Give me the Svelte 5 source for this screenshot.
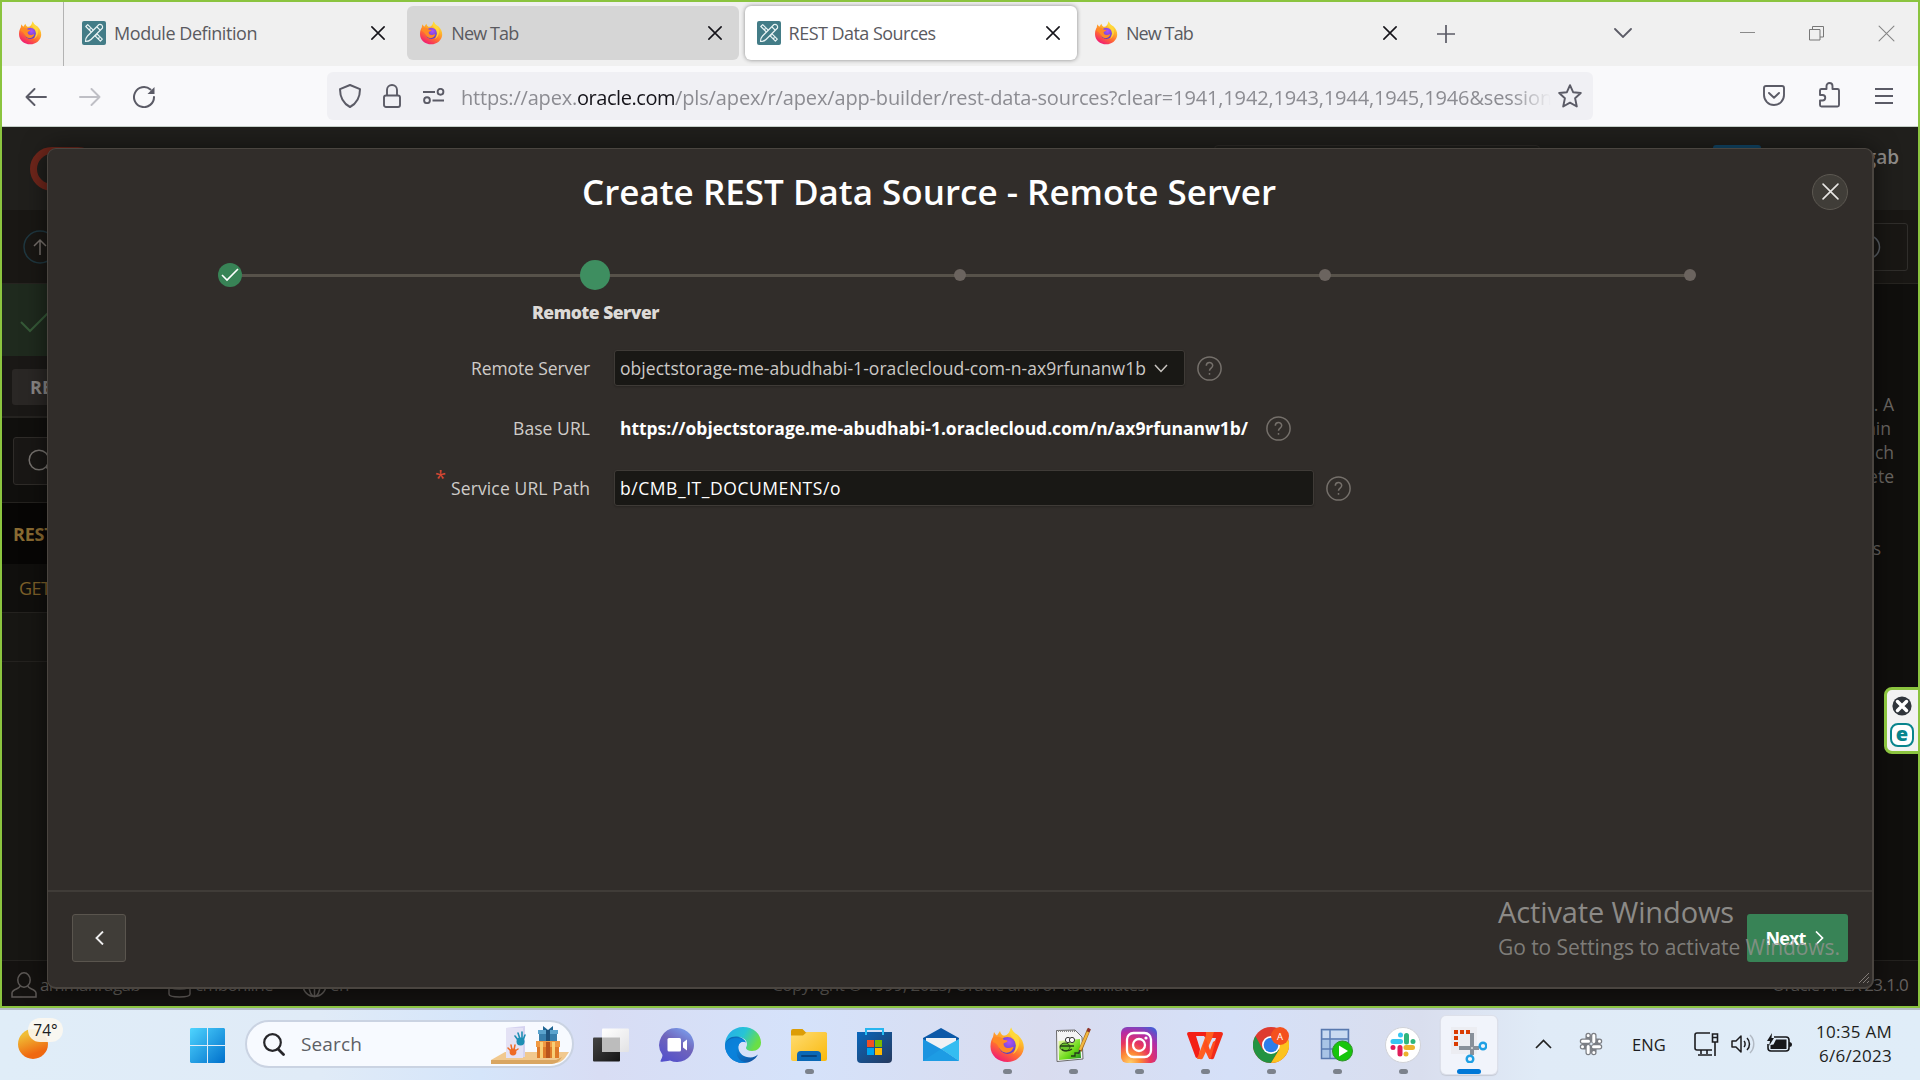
<script>
  // Spreads letter spacing so a label fills the width given in pixels.
  function fit(node, width) {
    const range = document.createRange();
    range.selectNodeContents(node);
    const natural = range.getBoundingClientRect().width;
    node.style.letterSpacing = `${(width - natural) / node.textContent.length}px`;
  }

  const tabs = [
    { title: 'Module Definition', icon: 'apex', width: 143, state: '' },
    { title: 'New Tab', icon: 'firefox', width: 67, state: 'hover' },
    { title: 'REST Data Sources', icon: 'apex', width: 147, state: 'active' },
    { title: 'New Tab', icon: 'firefox', width: 67, state: '' }
  ];

  const steps = ['done', 'current', 'todo', 'todo', 'todo'];

  const apps = [
    { id: 'taskview' }, { id: 'chat' }, { id: 'edge' }, { id: 'explorer', open: true },
    { id: 'store' }, { id: 'mail' }, { id: 'firefox', open: true }, { id: 'notepad', open: true },
    { id: 'instagram', open: true }, { id: 'wps', open: true }, { id: 'chrome', open: true },
    { id: 'server', open: true }, { id: 'slack', open: true }, { id: 'snip', active: true }
  ];
</script>

{#snippet firefox(size)}
  <svg width={size} height={size} viewBox="0 0 36 36">
    <defs>
      <linearGradient id="ffBody" x1=".8" y1="0" x2=".25" y2="1">
        <stop offset="0" stop-color="#fff44f" /><stop offset=".35" stop-color="#ffb42a" />
        <stop offset=".65" stop-color="#ff6a33" /><stop offset="1" stop-color="#f0127a" />
      </linearGradient>
      <radialGradient id="ffCore" cx=".6" cy=".3" r=".7">
        <stop offset="0" stop-color="#b052f5" /><stop offset="1" stop-color="#4f3fc8" />
      </radialGradient>
    </defs>
    <path d="M22 0c1 4 3 6 7 8 4 4 6 8 5.800 13C34 29 27 35 18.500 35 9 35 1.500 28.500 1.500 19.500c0-5 1.500-8 2.500-9.500l1-5c1 1.500 1.500 2.500 3 3.500L11 4c.5 2 1.500 3.500 3 4.500 3 0 4-.5 6-3C21 4 22 2 22 0z" fill="url(#ffBody)" />
    <circle cx="18.500" cy="18.500" r="8.500" fill="url(#ffCore)" />
    <path d="M4 11c4-2 9-1 11 2 1 0 3.500 0 3.500 1s-2 1.500-4 2.500c0 3 2 5 5.500 4.500 2-.3 3-1 4.500-1-1 4-4.500 6.500-8.500 5.500C9 24 10 16 4 15z" fill="#ff8a25" />
    <path d="M22 1c1.500 4 5 5.500 7 9 3 6 0 14-5 17 4-6 4-12-1-17-3-3-3-6-1-9z" fill="#ffd93b" opacity=".85" />
  </svg>
{/snippet}

{#snippet apex()}
  <svg width="24" height="24" viewBox="0 0 24 24">
    <rect width="24" height="24" rx="2" fill="#437c87" />
    <g fill="none" stroke="#e9f3f4" stroke-width="1.200" stroke-linejoin="round">
      <path d="M3.800 5.500 5.700 3.600 20.300 18.200 18.400 20.100zM7 9l1.500-1.500M10 12l1.500-1.500M13 15l1.500-1.500M16 18l1.500-1.500" />
      <path d="M17 3.500c2.500-.5 4 1 3.500 3.500L9 18.500C7.500 20 5 20.500 3.500 20.500c0-1.500.5-4 2-5.500z" fill="#437c87" />
      <path d="M15 6l3.200 3.200" />
    </g>
  </svg>
{/snippet}

{#snippet cross(size, color, w)}
  <svg width={size} height={size} viewBox="0 0 16 16"><path d="M1 1l14 14M15 1 1 15" fill="none" stroke={color} stroke-width={w} stroke-linecap="round" /></svg>
{/snippet}

{#snippet help()}
  <svg class="help" width="25" height="25" viewBox="0 0 25 25" fill="none" stroke="#75706b" stroke-width="1.500">
    <circle cx="12.500" cy="12.500" r="11.600" /><path d="M9.300 9.800c0-4.300 6.400-4.200 6.400-.2 0 2.600-3.200 2.500-3.200 5.200M12.500 17v1.800" />
  </svg>
{/snippet}

{#snippet appIcon(id)}
  {#if id === 'firefox'}
    {@render firefox(36)}
  {:else}
    <svg width="36" height="36" viewBox="0 0 36 36">
      {#if id === 'taskview'}
        <defs><linearGradient id="tv" y2="1"><stop stop-color="#444" /><stop offset="1" stop-color="#151515" /></linearGradient>
          <linearGradient id="tvl" x2="1" y2="1"><stop stop-color="#fff" /><stop offset="1" stop-color="#e2e2e4" /></linearGradient></defs>
        <rect y="10.500" width="27" height="24" rx="1" fill="url(#tv)" />
        <rect x="9" y="1.500" width="27" height="23.500" rx="1" fill="url(#tvl)" />
        <path d="M9 10.500h18V25H9z" fill="#bcbcbc" />
      {:else if id === 'chat'}
        <defs><linearGradient id="ch" x1=".8" x2=".2" y2="1"><stop stop-color="#7aa0ee" /><stop offset=".45" stop-color="#7065bb" /><stop offset="1" stop-color="#5350cc" /></linearGradient></defs>
        <path d="M18 1a17 17 0 1 1-7 32.500C7 34.500 3 35 1.500 34.500 1 34 3.500 31 3.500 28A17 17 0 0 1 18 1z" fill="url(#ch)" />
        <rect x="8.500" y="11" width="13.500" height="13.500" rx="1.500" fill="#fff" /><path d="M24 15.500l4-3v11l-4-3z" fill="#fff" />
      {:else if id === 'edge'}
        <defs><linearGradient id="eg" x2="1" y2=".4"><stop stop-color="#27a9ee" /><stop offset=".55" stop-color="#27c4d5" /><stop offset="1" stop-color="#6adf45" /></linearGradient>
          <linearGradient id="eb" x2="1" y2="1"><stop stop-color="#0c5ba3" /><stop offset=".4" stop-color="#0a84da" /><stop offset="1" stop-color="#134a96" /></linearGradient></defs>
        <path d="M0 18C0 8 8 0 18 0c11 0 18 7.500 18 15.500 0 5.500-4 8.500-9 8.500-4 0-6-1.500-6-3 0-1 1-1.500 1-4 0-4-4-7-9.500-7C6 10 1 14 0 18z" fill="url(#eg)" />
        <path d="M0 18C1 12 6 9 12 9.500c4 .5 8 3 9 6-5-2-8 1-7.500 6 .5 5 5.500 9 12 9 3 0 6-1.500 7.500-3C30 33 25 36 18 36 8 36 0 28 0 18z" fill="url(#eb)" />
        <path d="M13.500 18.500C9 24 12 35 22 35.500c-1 .5-2.500.5-4 .5C8 36 0 28 0 18c1-4 5-7 10-7 5 0 8 1.500 10 4-3-1-5.500.5-6.500 3.500z" fill="#0b83dc" opacity=".85" />
      {:else if id === 'explorer'}
        <defs><linearGradient id="ex" x2="1" y2="1"><stop stop-color="#ffdc72" /><stop offset="1" stop-color="#f9b90d" /></linearGradient></defs>
        <path d="M0 4q0-2 2-2h9.500L15 5.500h19q2 0 2 2V14H0z" fill="#dc9d06" />
        <path d="M0 8.500h12L16 5h18q2 0 2 2v25q0 2-2 2H2q-2 0-2-2z" fill="url(#ex)" />
        <path d="M6 34V28q0-4 4-4h16q4 0 4 4v6z" fill="#0a68b6" /><path d="M11 29h14" stroke="#06437e" stroke-width="2" stroke-linecap="round" />
      {:else if id === 'store'}
        <defs><linearGradient id="st" x2="1" y2="1"><stop stop-color="#0967bd" /><stop offset="1" stop-color="#26395d" /></linearGradient></defs>
        <path d="M9 8V2h17v6" fill="none" stroke="#27b5ef" stroke-width="2" />
        <path d="M0 5h35v27q0 4-4 4H4q-4 0-4-4z" fill="url(#st)" /><path d="M9 5v3M26 5v3" stroke="#27c0f5" stroke-width="2" />
        <path d="M10 13h7v7h-7z" fill="#f25022" /><path d="M18 13h7v7h-7z" fill="#7fba00" /><path d="M10 21h7v7h-7z" fill="#00a4ef" /><path d="M18 21h7v7h-7z" fill="#ffb900" />
      {:else if id === 'mail'}
        <path d="M0 11 18 1l18 10v6H0z" fill="#0c59a8" /><path d="M3 11h30v8L18 26 3 19z" fill="#f0f1f4" />
        <path d="M0 12 18 22 36 34H0z" fill="#1b94e0" /><path d="M36 12 18 22 36 34z" fill="#35bdf1" /><path d="M0 34h36L18 22z" fill="#1d9ce4" />
      {:else if id === 'notepad'}
        <defs><linearGradient id="np" y2="1"><stop stop-color="#eff9a8" /><stop offset=".6" stop-color="#6ddb1a" /><stop offset="1" stop-color="#1a8b22" /></linearGradient></defs>
        <path d="M1.500 3.500 20 3l7 7 1 22-26 2.500z" fill="#f5f5f5" stroke="#6b6b6b" />
        <path d="M3.500 14 25 12l1 19-22 2z" fill="url(#np)" />
        <path d="M3 4h18" stroke="#888" stroke-width="2" stroke-dasharray="1 1" />
        <ellipse cx="10" cy="20" rx="5" ry="4" fill="#6ac62c" stroke="#2d4c1b" /><path d="M5 19h14M7 22c2 3 7 2 10 0M16 29h4v-3h4" fill="none" stroke="#243d18" stroke-width="1.300" />
        <circle cx="13" cy="13" r="2.600" fill="#fff" stroke="#333" /><circle cx="17" cy="13" r="2.600" fill="#fff" stroke="#333" />
        <path d="M34 2 25 24" stroke="#a3691b" stroke-width="3.500" /><path d="M33 5 25 23" stroke="#f2b740" stroke-width="2.300" /><path d="M34.500 1.500 33 4.500" stroke="#8e3131" stroke-width="3" /><path d="M25 23l-1.500 4" stroke="#333" stroke-width="1.500" />
      {:else if id === 'instagram'}
        <defs><radialGradient id="ig" cx=".25" cy="1" r="1.150"><stop stop-color="#ffd06a" /><stop offset=".25" stop-color="#fd8a35" /><stop offset=".5" stop-color="#e8345f" /><stop offset=".75" stop-color="#b52ca5" /><stop offset="1" stop-color="#4a5bd3" /></radialGradient></defs>
        <rect width="36" height="36" rx="6" fill="url(#ig)" />
        <g fill="none" stroke="#fff" stroke-width="2.300"><rect x="6" y="6" width="24" height="24" rx="6.500" /><circle cx="18" cy="18" r="6" /></g><circle cx="25" cy="11" r="1.600" fill="#fff" />
      {:else if id === 'wps'}
        <path d="M0 7q0-2 2-2h20l-3 7-2-3H9l4 13-1 8-2 1q-1 0-1.500-1z" fill="#f31f16" /><path d="M19 5h9L16 31q-1 2-3 1h-3l9-24z" fill="#ff5f1f" /><path d="M27 5h7q2 0 2 2L27 31q-1 2-3 1h-2l7-21h-4z" fill="#f12b18" /><path d="M19 12l4 11 3-8 3-2-5 18q-1 2-2.500 0L16 19z" fill="#ff4e1e" />
      {:else if id === 'chrome'}
        <circle cx="18" cy="18" r="18" fill="#de3b30" />
        <path d="M2.400 9A18 18 0 0 0 18 36l8-13H10z" fill="#229342" /><path d="M18 36A18 18 0 0 0 33.600 9H18l8 14z" fill="#fcc31e" />
        <circle cx="18" cy="18" r="9" fill="#fff" /><circle cx="18" cy="18" r="7.300" fill="#2b7de9" />
        <circle cx="27" cy="9" r="9" fill="#f4511e" /><text x="27" y="12.500" text-anchor="middle" font-size="9.500" fill="#fff">A</text>
      {:else if id === 'server'}
        <rect x="2.500" y="2.500" width="27" height="29" fill="#a9c4e6" stroke="#5878ae" stroke-width="1.500" />
        <path d="M3 12h26M3 22h26M11 3v28" stroke="#5b7cb4" stroke-width="1.300" /><path d="M12 4h16v7H12zM4 4h6v7H4z" fill="#c9daf1" />
        <circle cx="23.500" cy="24" r="10" fill="#17c50c" stroke="#2e9326" /><path d="M20 18.500v11l9-5.500z" fill="#fff" />
      {:else if id === 'slack'}
        <circle cx="18" cy="18" r="17.500" fill="#fff" stroke="#d0d2d8" />
        <g stroke-width="5" stroke-linecap="round"><path d="M15.500 8v0M8 14.500h7.500" stroke="#36c5f0" /><path d="M21.500 8.500v6.500M28 14.500v0" stroke="#2eb67d" /><path d="M8 20.500v0M15 20.500v6.500" stroke="#e01e5a" /><path d="M21 20.500h6.500M21 27v0" stroke="#ecb22e" /></g>
      {:else if id === 'snip'}
        <rect y="0" width="26" height="27" fill="#eae7ec" opacity=".6" />
        <path d="M3 3h4v4H3zM9 3h4v4H9zM15 3h4v4h-4zM3 9h4v4H3zM3 15h4v4H3z" fill="#da3b01" />
        <path d="M21 6v22M8 21h20" stroke="#88909a" stroke-width="4" /><circle cx="21" cy="21" r="1" fill="#ddd" />
        <g fill="none" stroke="#1fa0e4" stroke-width="2.400"><circle cx="32" cy="19" r="3.300" /><circle cx="19" cy="32" r="3.300" /></g>
      {/if}
    </svg>
  {/if}
{/snippet}

<div class="screen">
  <div class="window">
    <div class="tabbar">
      <div class="pinned">{@render firefox(24)}</div>
      {#each tabs as tab}
        <div class="tab {tab.state}">
          {#if tab.icon === 'apex'}{@render apex()}{:else}{@render firefox(24)}{/if}
          <span class="tab-title"><span use:fit={tab.width}>{tab.title}</span></span>
          {@render cross(14, '#15141a', 1.8)}
        </div>
      {/each}
      <svg class="plus" width="18" height="18" viewBox="0 0 18 18"><path d="M9 0v18M0 9h18" stroke="#5b5b66" stroke-width="1.700" /></svg>
      <div class="controls">
        <svg width="18" height="10" viewBox="0 0 18 10"><path d="M1 1l8 8 8-8" fill="none" stroke="#5b5b66" stroke-width="1.800" stroke-linecap="round" /></svg>
        <svg width="15" height="16" viewBox="0 0 15 16"><path d="M0 7.500h15" stroke="#8a8a8a" /></svg>
        <svg width="15" height="15" viewBox="0 0 15 15" fill="none" stroke="#777"><path d="M.5 3.500h10.500V14H.5zM3.500 3.500v-3h11v10.500H11" /></svg>
        {@render cross(17, '#858585', 1)}
      </div>
    </div>

    <div class="toolbar">
      <div class="nav">
        <svg width="22" height="18" viewBox="0 0 22 18" fill="none" stroke="#5b5b66" stroke-width="1.900" stroke-linecap="round" stroke-linejoin="round"><path d="M21 9H1.500M9.500 1l-8 8 8 8" /></svg>
        <svg width="22" height="18" viewBox="0 0 22 18" fill="none" stroke="#bfbfc5" stroke-width="1.900" stroke-linecap="round" stroke-linejoin="round"><path d="M1 9h19.500M12.500 1l8 8-8 8" /></svg>
        <svg width="22" height="22" viewBox="0 0 22 22"><path d="M21 11a10 10 0 1 1-3.500-7.500" fill="none" stroke="#5b5b66" stroke-width="2" stroke-linecap="round" /><path d="M21.500 1v7h-7z" fill="#5b5b66" /></svg>
      </div>
      <div class="urlbox">
        <svg width="22" height="24" viewBox="0 0 22 24" fill="none" stroke="#5b5b66" stroke-width="2" stroke-linejoin="round"><path d="M11 1l10 4.200c0 8-3 14-10 17.800C4 19.200 1 13.200 1 5.200z" /></svg>
        <svg width="18" height="24" viewBox="0 0 18 24" fill="none" stroke="#5b5b66" stroke-width="1.900"><rect x="1" y="11.500" width="16" height="11.500" rx="2" /><path d="M4 11.500V6a5 5 0 0 1 10 0v5.500" /></svg>
        <svg width="22" height="16" viewBox="0 0 22 16" fill="none" stroke="#5b5b66" stroke-width="1.900"><path d="M0 4h12M9.500 12.500H21" /><circle cx="17.500" cy="3.800" r="2.900" /><circle cx="4" cy="12.200" r="2.900" /></svg>
        <div class="url"><span use:fit={116}>https://apex.</span><span class="host" use:fit={98}>oracle.com</span><span use:fit={877}>/pls/apex/r/apex/app-builder/rest-data-sources?clear=1941,1942,1943,1944,1945,1946&amp;session</span></div>
        <svg width="24" height="24" viewBox="0 0 24 24" fill="none" stroke="#5b5b66" stroke-width="1.900" stroke-linejoin="round"><path d="M12 1.200l3.100 7 7.700.8-5.700 5.200 1.700 8.300L12 18.600 5.200 22.500l1.700-8.300L1.200 9l7.700-.8z" /></svg>
      </div>
      <div class="extras">
        <svg width="22" height="22" viewBox="0 0 22 22" fill="none" stroke="#5b5b66" stroke-width="1.900" stroke-linecap="round" stroke-linejoin="round"><path d="M3 1h16q2 0 2 2v7a10 10 0 0 1-20 0V3q0-2 2-2zM6 8l5 4.800L16 8" /></svg>
        <svg width="22" height="26" viewBox="0 0 22 26" fill="none" stroke="#5b5b66" stroke-width="1.900" stroke-linejoin="round"><path d="M2 13V8.500q0-1.500 1.500-1.500h5V4a3 3 0 0 1 6 0v3h5q1.500 0 1.500 1.500V23q0 1.500-1.500 1.500h-16Q2 24.500 2 23v-4.500h2.500a2.700 2.700 0 0 0 0-5.500z" /></svg>
        <svg width="18" height="16" viewBox="0 0 18 16"><path d="M0 1h18M0 8h18M0 15h18" stroke="#5b5b66" stroke-width="1.900" /></svg>
      </div>
    </div>

    <div class="page">
      <header class="app-header">
        <svg class="oracle" width="70" height="44" viewBox="0 0 70 44"><rect x="3.500" y="3.500" width="63" height="37" rx="18.500" fill="none" stroke="#6f261b" stroke-width="7" /></svg>
        <span class="ghost-search"></span><span class="badge"></span>
        <b class="account">ammar.ragab</b>
      </header>
      <div class="crumbs">
        <svg width="34" height="34" viewBox="0 0 34 34" fill="none"><circle cx="17" cy="17" r="16" stroke="#1f3740" stroke-width="1.500" /><path d="M17 25V10M11 16l6-6 6 6" stroke="#77716c" stroke-width="1.500" /></svg>
        <span class="crumb-button"><svg width="26" height="26" viewBox="0 0 26 26"><circle cx="13" cy="13" r="11.500" fill="none" stroke="#5b6066" stroke-width="1.500" /></svg></span>
      </div>
      <div class="columns">
        <div class="main">
          <div class="alert"><svg width="30" height="22" viewBox="0 0 30 22"><path d="M1 11l9 9L29 1" fill="none" stroke="#365a38" stroke-width="2" /></svg></div>
          <div class="pills"><b>REST Data Sources</b></div>
          <div class="search"><div><svg width="26" height="26" viewBox="0 0 26 26" fill="none" stroke="#77736f" stroke-width="1.500"><circle cx="11" cy="11" r="9.800" /><path d="M18 18l7 7" /></svg></div></div>
          <div class="heading"><b>REST Source</b></div>
          <div class="row">GET</div>
          <div class="blank"></div>
        </div>
        <aside><p>. A</p><p>ain</p><p>ch</p><p>ete</p><p class="later">s</p></aside>
      </div>
      <footer>
        <span class="foot-item"><svg width="26" height="26" viewBox="0 0 26 26" fill="none" stroke="#5c5855" stroke-width="1.500"><ellipse cx="13" cy="8" rx="6.200" ry="7.200" /><path d="M9 14c0 3-8 3-8 7v4h24v-4c0-4-8-4-8-7" /></svg><span use:fit={100}>ammar.ragab</span></span>
        <span class="foot-item second"><svg width="23" height="26" viewBox="0 0 23 26" fill="none" stroke="#5c5855" stroke-width="1.500"><ellipse cx="11.500" cy="5" rx="10.500" ry="4" /><path d="M1 5v17c0 4 21 4 21 0V5M1 14c0 4 21 4 21 0" /></svg><span use:fit={78}>cmbonline</span></span>
        <span class="foot-item third"><svg width="25" height="26" viewBox="0 0 25 26" fill="none" stroke="#5c5855" stroke-width="1.500"><circle cx="12.500" cy="13" r="11.500" /><ellipse cx="12.500" cy="13" rx="5.500" ry="11.500" /><path d="M1 13h23M12.500 1v24" /></svg><span use:fit={19}>en</span></span>
        <span class="copyright"><span use:fit={377}>Copyright © 1999, 2023, Oracle and/or its affiliates.</span></span>
        <span class="version" use:fit={136}>Oracle APEX 23.1.0</span>
      </footer>

      <section class="dialog">
        <div class="title-row">
          <h1><span use:fit={694}>Create REST Data Source - Remote Server</span></h1>
          <button class="close" aria-label="Close">{@render cross(17, '#e8e6e4', 1.5)}</button>
        </div>
        <div class="steps">
          {#each steps as step}
            <div class="step"><i class={step}>{#if step === 'done'}<svg width="18" height="14" viewBox="0 0 18 14"><path d="M1 7l5 5L17 1" fill="none" stroke="#fff" stroke-width="1.600" /></svg>{/if}</i></div>
          {/each}
        </div>
        <div class="step-label"><b use:fit={127}>Remote Server</b></div>
        <div class="form">
          <label for="server"><span use:fit={119}>Remote Server</span></label>
          <div class="field">
            <div class="control select" id="server"><span use:fit={526}>objectstorage-me-abudhabi-1-oraclecloud-com-n-ax9rfunanw1b</span><svg width="14" height="9" viewBox="0 0 14 9"><path d="M1 1l6 6.500L13 1" fill="none" stroke="#c9c5c1" stroke-width="1.500" /></svg></div>
            {@render help()}
          </div>
          <label for="base"><span use:fit={77}>Base URL</span></label>
          <div class="field base" id="base"><b><span use:fit={628}>https://objectstorage.me-abudhabi-1.oraclecloud.com/n/ax9rfunanw1b/</span></b>{@render help()}</div>
          <label for="path"><em>*</em><span use:fit={139}>Service URL Path</span></label>
          <div class="field">
            <div class="control input" id="path"><span use:fit={221}>b/CMB_IT_DOCUMENTS/o</span></div>
            {@render help()}
          </div>
        </div>
        <div class="actions">
          <button class="back" aria-label="Back"><svg width="9" height="14" viewBox="0 0 9 14"><path d="M8 .5 1.500 7 8 13.500" fill="none" stroke="#eee" stroke-width="1.900" /></svg></button>
          <button class="next"><b use:fit={40}>Next</b><svg width="9" height="14" viewBox="0 0 9 14"><path d="M1 .5 7.500 7 1 13.500" fill="none" stroke="#fff" stroke-width="1.700" /></svg></button>
        </div>
        <svg class="resize" width="12" height="12" viewBox="0 0 12 12"><path d="M1 11 11 1M5 11l6-6M9 11l2-2" stroke="#8a8580" stroke-width=".9" /></svg>
      </section>
    </div>
  </div>

  <div class="taskbar">
    <div class="weather"><span class="sun"></span><span class="temp">74°</span></div>
    <svg class="start" width="35" height="35" viewBox="0 0 35 35"><defs><linearGradient id="win" x2="1" y2="1"><stop stop-color="#4fd5ff" /><stop offset="1" stop-color="#006fcb" /></linearGradient></defs><path d="M1 0h16v17H0V1zM18 0h16l1 1v16H18zM0 18h17v17H1l-1-1zM18 18h17v16l-1 1H18z" fill="url(#win)" /></svg>
    <div class="task-search">
      <svg width="22" height="23" viewBox="0 0 22 23" fill="none" stroke="#26262a" stroke-width="2.200" stroke-linecap="round"><circle cx="9.500" cy="9.500" r="8.300" /><path d="M15 16l5.500 5.500" stroke-width="2.800" /></svg>
      <span><span use:fit={61}>Search</span></span>
      <svg class="gifts" width="78" height="41" viewBox="0 0 78 41">
        <path d="M14 27h64l-4 6q-4 5-10 5H0v-3z" fill="#f1c98f" /><path d="M0 35h65l6-3q-4 7-10 7H0z" fill="#d9a662" />
        <path d="M15 3l19-2v31H15z" fill="#d5d3f0" /><path d="M15 3h17v30H15z" fill="#e4e2f5" />
        <g stroke="#1d8fb4" stroke-width="1.600" stroke-linecap="round"><path d="M24 11l3 4M27 8l2 6M31 7v7M34 10l-2 5" /></g><ellipse cx="29.500" cy="16.500" rx="4" ry="4" fill="#1d8fb4" />
        <g stroke="#ee6b25" stroke-width="1.500" stroke-linecap="round"><path d="M17 23l3 3M20 20l1 5M24 20l-1 5M27 24l-3 2" /></g><circle cx="22" cy="27" r="3.400" fill="#ee6b25" />
        <path d="M48 5h18v12H48z" fill="#397fac" /><path d="M47 5h20v4H47z" fill="#5ba3cd" /><path d="M55 5h4v12h-4z" fill="#1e527c" /><path d="M57 5l-5-4v4zM57 5l5-4v4z" fill="#1e6593" />
        <path d="M46 17h22v16H46z" fill="#de7a28" /><path d="M45 16h24v6H45z" fill="#f09a43" /><path d="M49 17h3v16h-3zM61 17h3v16h-3z" fill="#f8cf76" /><path d="M55 17h4v16h-4z" fill="#b9541b" />
      </svg>
    </div>
    <div class="apps">
      {#each apps as app}
        <div class="app"><div class="tile" class:selected={app.active}>{@render appIcon(app.id)}{#if app.open || app.active}<i class:wide={app.active}></i>{/if}</div></div>
      {/each}
    </div>
    <div class="tray">
      <svg width="17" height="10" viewBox="0 0 17 10"><path d="M1 9l7.500-7.500L16 9" fill="none" stroke="#222" stroke-width="1.700" /></svg>
      <svg class="tray-slack" width="24" height="24" viewBox="0 0 24 24"><g stroke-linecap="round" stroke="#7b7e84" stroke-width="5.500"><path d="M9.200 3.500v6M3.500 9.200h5M14.800 3.500v5.500M20.500 9.200h-5M3.500 14.800h6M9.200 20.500v-5M14.800 14.800v5.700M20.500 14.800h-5" /></g><g stroke-linecap="round" stroke="#fff" stroke-width="3"><path d="M9.200 3.500v0M3.500 9.200h6M14.800 3.500v6M20.500 9.200v0M3.500 14.800v0M9.200 20.500v-6M14.800 20.500v0M20.500 14.800h-6" /></g></svg>
      <span class="lang" use:fit={34}>ENG</span>
      <svg class="monitor" width="25" height="24" viewBox="0 0 25 24" fill="none" stroke="#1c1c1f" stroke-width="1.600"><path d="M16 1H3Q1 1 1 3v13q0 2 2 2h15M7 18v4M13 18v4M4 23h14M21 10v14M18.500 2h5v8h-5zM18.500 5.500h5" /></svg>
      <svg class="speaker" width="24" height="20" viewBox="0 0 24 20" fill="none" stroke="#1c1c1f" stroke-width="1.500" stroke-linejoin="round"><path d="M1 7h4l5-5v16l-5-5H1zM13 7c1.500 1.500 1.500 4.500 0 6M16 4c3.300 3.300 3.300 8.700 0 12" /><path d="M19 1c5 5 5 13 0 18" stroke="#b2bac4" /></svg>
      <svg class="battery" width="25" height="20" viewBox="0 0 25 20"><path d="M7 4h12q3 0 3 3v8q0 3-3 3H4q-3 0-3-3v-4" fill="none" stroke="#16171a" stroke-width="1.600" /><path d="M9 6.500h10.500v9.500H3.500V12l3-.5z" fill="#16171a" /><path d="M5 0 0 8h3l-1 5 5-8H4.500zM22 9q3 0 3 2.500T22 14z" fill="#16171a" /></svg>
      <div class="clock"><span use:fit={76}>10:35 AM</span><span use:fit={73}>6/6/2023</span></div>
    </div>
  </div>

  <div class="watermark"><div use:fit={236}>Activate Windows</div><p><span use:fit={342}>Go to Settings to activate Windows.</span></p></div>
  <div class="eset">
    <svg width="20" height="20" viewBox="0 0 20 20"><circle cx="10" cy="10" r="9.600" fill="#30353b" /><path d="M5.500 5.500l9 9M14.500 5.500l-9 9" stroke="#fff" stroke-width="3.500" stroke-linecap="round" /></svg>
    <svg width="24" height="24" viewBox="0 0 24 24"><rect x="1" y="1" width="22" height="22" rx="7" fill="#fff" stroke="#08848d" stroke-width="2" /><text x="12" y="17.500" text-anchor="middle" font-size="20" font-weight="800" fill="#08848d">e</text></svg>
  </div>
</div>

<style>
  :global(body) { margin: 0; overflow: hidden; }
  * { box-sizing: border-box; }
  svg { display: block; flex: none; }
  .screen { position: relative; width: 1920px; height: 1080px; overflow: hidden; font-family: "Open Sans", "Noto Sans", sans-serif; white-space: nowrap; }
  .window { height: 1008px; border: 2px solid #8bc43f; display: flex; flex-direction: column; }

  .tabbar { height: 64px; flex: none; background: #f0f0f0; display: flex; align-items: center; padding-bottom: 2px; }
  .pinned { width: 62px; height: 64px; margin-bottom: -2px; border-right: 1px solid #b3b3b3; display: flex; align-items: center; padding: 0 0 2px 16px; }
  .tab { width: 332px; height: 54px; margin: 0 5.300px 0 0; padding: 0 17px 0 12px; display: flex; align-items: center; border-radius: 6px; font-size: 18px; color: #5a5a5f; }
  .pinned + .tab { margin-left: 6px; }
  .tab-title { flex: 1; margin-left: 8px; }
  .hover { background: #d6d6d6; }
  .active { background: #fff; box-shadow: 0 0 4px #888; }
  .plus { margin: 2px 0 0 18px; }
  .controls { margin-left: auto; display: flex; align-items: center; gap: 54px; padding-right: 23px; }
  .controls svg:first-child { margin-right: 54px; }

  .toolbar { height: 61px; flex: none; background: #f9f9fb; border-bottom: 1px solid #c5cfc8; display: flex; align-items: center; }
  .nav { width: 325px; display: flex; align-items: center; gap: 32px; padding: 2px 0 0 23px; }
  .urlbox { width: 1266px; height: 48px; border-radius: 6px; background: #f0f0f4; display: flex; align-items: center; padding-left: 12px; }
  .urlbox svg + svg { margin-left: 22px; }
  .url { width: 1093px; margin: 2px 4px 0 16px; font-size: 20px; color: #8c8c92; overflow: hidden; mask-image: linear-gradient(90deg, #000 1050px, transparent 1090px); }
  .host { color: #15141a; }
  .extras { margin-left: auto; display: flex; align-items: center; gap: 34px; padding-right: 25px; }
  .extras svg:nth-child(2) { margin: -2px 0 0 -1px; }
  .extras svg:nth-child(3) { margin-left: 1px; }

  .page { position: relative; flex: 1; overflow: hidden; background: #100f0d; display: flex; flex-direction: column; }
  .app-header { height: 83px; flex: none; background: #201f1c; display: flex; align-items: flex-start; padding-right: 19px; }
  .oracle { margin: 20px 0 0 28px; }
  .ghost-search { width: 326px; height: 40px; margin: 18px 0 0 1114px; border: 1px solid #2f2d29; border-radius: 4px; }
  .badge { width: 48px; height: 40px; margin: 18px 0 0 173px; background: #12496b; border-radius: 3px; }
  .account { margin: 18px 0 0 auto; font-size: 19px; line-height: 24px; font-weight: 600; color: #8f8c89; }
  .crumbs { height: 74px; flex: none; background: #191714; border-bottom: 1px solid #262420; display: flex; align-items: center; justify-content: space-between; padding: 1px 10px 0 21px; }
  .crumb-button { width: 70px; height: 48px; border: 1px solid #302e2b; border-radius: 3px; display: flex; align-items: center; padding-left: 16px; }
  .columns { flex: 1; display: flex; min-height: 0; }
  .main { width: 1400px; display: flex; flex-direction: column; background: #171613; }
  .alert { height: 72px; background: #1f2a1e; padding: 27px 0 0 18px; }
  .pills { height: 62px; background: #1a1816; border-bottom: 2px solid #252320; padding: 13px 0 0 10px; }
  .pills b { display: block; width: 190px; height: 36px; padding-left: 18px; border-radius: 3px; background: #2a2725; font-size: 18px; line-height: 36px; color: #8b8885; }
  .search { height: 85px; background: #100f0d; border-bottom: 1px solid #24221f; padding: 19px 0 0 11px; }
  .search div { width: 500px; height: 48px; border: 1px solid #2f2c29; border-radius: 3px; background: #191715; padding: 11px 0 0 14px; }
  .heading { height: 61px; background: #070605; padding-left: 11px; line-height: 62px; font-size: 18px; color: #8a6b32; }
  .heading b { letter-spacing: -.2px; }
  .row { height: 49px; background: #100f0d; border-bottom: 1px solid #24221f; padding-left: 17px; line-height: 49px; font-size: 18px; letter-spacing: -.5px; color: #7d6029; }
  .blank { height: 49px; border-bottom: 1px solid #24221f; }
  aside { flex: 1; text-align: right; padding: 108px 24px 0 0; color: #6b6763; font-size: 17.500px; line-height: 24px; }
  aside p { margin: 0; }
  aside p:nth-child(2) { padding-right: 3px; }
  aside .later { padding: 48px 13px 0 0; }
  footer { height: 46px; flex: none; background: #141210; border-top: 1px solid #24221f; display: flex; align-items: center; padding: 2px 10px 0 9px; font-size: 17px; line-height: 20px; color: #5c5855; }
  .foot-item { display: flex; align-items: center; gap: 3px; width: 157px; }
  .second { width: 134px; gap: 4px; }
  .third { width: 50px; }
  .copyright { margin-left: 420px; }
  .version { margin-left: auto; color: #666260; }

  .dialog { position: absolute; left: 45px; top: 21px; width: 1827px; height: 841px; border: 1px solid #4a4540; border-right-width: 2px; border-bottom-width: 2px; border-radius: 9px; background: #312d2a; box-shadow: 0 0 24px #0008; display: flex; flex-direction: column; color: #fff; }
  .title-row { height: 85px; flex: none; display: flex; align-items: center; padding-right: 24px; }
  h1 { flex: 1; margin: 0 0 0 534px; font-size: 35px; line-height: 46px; font-weight: 600; }
  button { font: inherit; padding: 0; display: flex; align-items: center; justify-content: center; }
  .close { width: 36px; height: 36px; border: 1px solid #5c5851; border-radius: 50%; background: #403d38; }
  .steps { position: relative; height: 82px; flex: none; display: flex; }
  .steps::before { content: ''; position: absolute; left: 182px; width: 1460px; top: 39.500px; height: 3px; background: #57524a; }
  .step { width: 365px; display: flex; align-items: center; justify-content: center; position: relative; left: -1px; flex: none; }
  i { display: flex; align-items: center; justify-content: center; border-radius: 50%; background: #6b645f; width: 12px; height: 12px; }
  .done { width: 24px; height: 24px; background: #388356; }
  .current { width: 30px; height: 30px; background: #3e8e60; }
  .step-label { height: 32px; margin-top: -20px; padding-left: 484px; font-size: 17.500px; line-height: 32px; color: #dddad7; font-weight: 600; }
  .form { display: grid; grid-template-columns: 542px 1fr; grid-auto-rows: 60px; column-gap: 24px; margin-top: 10px; align-items: center; font-size: 17.500px; }
  label { position: relative; text-align: right; color: #cfccc9; }
  label span { display: inline-block; }
  em { position: absolute; right: 144px; top: -10px; color: #d64733; font-style: normal; font-size: 20px; line-height: 24px; }
  .field { display: flex; align-items: center; }
  .help { margin-left: 12px; }
  .control { height: 36px; border: 1px solid #3f3b37; border-radius: 3px; background: #191815; display: flex; align-items: center; padding-left: 5px; box-shadow: 0 1px 2px #0003; }
  .select { width: 571px; color: #ccc9c6; }
  .select svg { margin-left: 8px; }
  .input { width: 700px; }
  .base b { padding-left: 6px; }
  .base .help { margin-left: 18px; }
  .actions { height: 97px; margin-top: auto; border-top: 2px solid #403c38; display: flex; align-items: center; justify-content: space-between; padding: 0 24px 3px; }
  .back { width: 54px; height: 48px; border: 1px solid #5a554e; border-radius: 3px; background: #403d38; }
  .next { width: 101px; height: 48px; border: 0; border-radius: 3px; background: #388356; color: #fff; font-size: 18px; gap: 9px; padding-right: 6px; }
  .resize { position: absolute; right: 2px; bottom: 3px; }

  .taskbar { height: 72px; border-top: 2px solid #b3bbc7; display: flex; align-items: center; background: linear-gradient(90deg, #e0edf8 0, #e0ebf7 320px, #d5e5fa 480px, #d8ddf4 600px, #d5e2fa 800px, #d9dcef 1040px, #d5e0f8 1230px, #d9deee 1420px, #e0ebf7 1540px, #e0edf8); color: #1d1d20; }
  .weather { position: relative; width: 190px; height: 70px; flex: none; }
  .sun { position: absolute; left: 18px; top: 19px; width: 30px; height: 30px; border-radius: 50%; background: linear-gradient(160deg, #f0bd35 20%, #ef6810 75%); }
  .temp { position: absolute; left: 28px; top: 8px; width: 35px; height: 24px; border-radius: 12px; background: #fbf7f0e8; font-size: 15.500px; line-height: 24px; text-align: center; }
  .start { margin-right: 20px; }
  .task-search { width: 329px; height: 48px; margin-top: -2px; border: 2px solid #cad3e2; border-radius: 24px; background: #f7faff; display: flex; align-items: center; padding-left: 16px; flex: none; color: #5d5f65; font-size: 19px; overflow: hidden; }
  .task-search > span { width: 206px; padding-left: 16px; }
  .gifts { margin-top: 3px; }
  .apps { display: flex; margin-left: 4px; }
  .app { width: 66px; display: flex; justify-content: center; }
  .tile { position: relative; width: 56px; height: 58px; margin-bottom: 1px; display: flex; align-items: center; justify-content: center; border-radius: 5px; }
  .selected { background: #f1f4fb; box-shadow: 0 0 0 1px #dde0ea, 0 1px 1px 1px #c5cad5; }
  .tile i { position: absolute; bottom: 0; width: 9px; height: 5px; border-radius: 3px; background: #7c828c; }
  .tile i.wide { width: 24px; background: #0078d7; }
  .tray { flex: 1; display: flex; align-items: center; margin: 0 0 2px 33px; }
  .tray-slack { margin-left: 27px; }
  .lang { margin-left: 29px; font-size: 16.500px; }
  .monitor { margin-left: 28px; }
  .speaker { margin-left: 12px; }
  .battery { margin: -2px 0 0 12px; }
  .clock { margin-left: auto; padding-right: 28px; text-align: right; display: flex; flex-direction: column; align-items: flex-end; font-size: 17px; line-height: 24px; }

  .watermark { position: absolute; left: 1498px; top: 892px; color: #8c8a87; font-size: 29px; line-height: 40px; }
  .watermark div { width: 236px; }
  .watermark p { margin: 0; font-size: 21px; line-height: 30px; color: #94938fcc; }
  .eset { position: absolute; right: 0; top: 687px; width: 36px; height: 67px; border: 3px solid #8bc43f; border-right-width: 2px; border-radius: 8px 0 0 8px; background: #f2f2f2; display: flex; flex-direction: column; align-items: center; justify-content: center; gap: 7px; padding: 1px 1px 0 0; }
</style>
